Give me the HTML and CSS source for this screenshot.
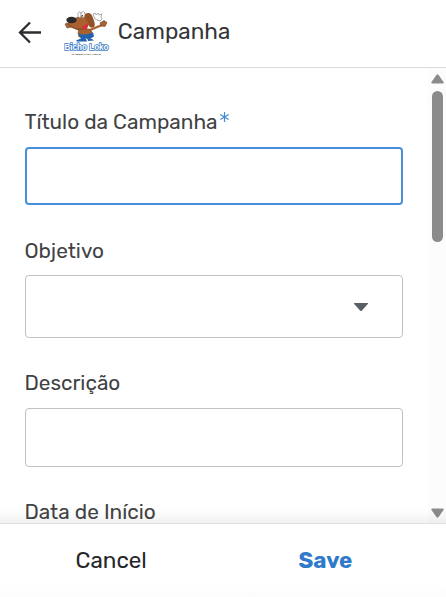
FILE: index.html
```html
<!DOCTYPE html>
<html lang="pt">
<head>
<meta charset="utf-8">
<title>Campanha</title>
<link rel="stylesheet" href="styles.css">
</head>
<body>
<header class="header">
  <svg class="back" width="24" height="24" viewBox="0 0 24 24"><path d="M23 11.500H2.500M12 1.500L2 11.500l10 10"/></svg>
  <svg class="logo" width="48" height="48" viewBox="0 0 48 48">
    <path class="glove" d="M29 4l2-1 1 2 2-2 1 2 3-1-1 3 1 2-2 2-3-1-2-1z"/>
    <path class="fur-line" d="M17 20.500L5 15.500M26 20l12-5"/>
    <path class="fur" d="M1 14l2-1 3 1 1 3-4 1zM36 13l4-2.500 3 2-2 4-4-.5z"/>
    <path class="fur" d="M15 19h11l3 5-2 3H15l-1-4z"/>
    <path class="fur" d="M4 11l8-3q4-2 10-4 5 3 3 10-2 5-8 5-8-.5-11-3-2-2-2-5z"/>
    <path class="ear" d="M21 4q6-3 8 4 3 7 1 9-3 2-5-1-1-5-4-8z"/>
    <path class="mouth" d="M17.500 16.500q4-.5 5.500-4 2 6-1 7-3 0-4.500-3z"/>
    <ellipse class="nose" cx="7.500" cy="10" rx="5.200" ry="3.200"/>
    <ellipse class="eye" cx="15.500" cy="4.700" rx="1.700" ry="2.800"/>
    <ellipse class="eye" cx="19" cy="4.500" rx="1.900" ry="2.900"/>
    <circle class="nose" cx="18.400" cy="5.800" r=".7"/>
    <path class="pants" d="M14 23.500q7 2.500 15-1l1 4-5 3-3-1-4 2zM12 30.500l5-2 5 .5 1 2.500H13zM23 28l5 1 2 1.500-6 .5z"/>
    <text class="logo-name" x=".500" y="39.800" textLength="44" lengthAdjust="spacingAndGlyphs">Bicho Loko</text>
    <text class="logo-tag" x="8" y="44.600" textLength="29" lengthAdjust="spacingAndGlyphs">CABER PARA AMAR</text>
  </svg>
  <h1 class="title">Campanha</h1>
</header>
<main class="content">
  <form class="form">
    <div class="field"><label class="label">Título da Campanha<svg class="star" width="9" height="10" viewBox="0 0 9 10"><path d="M4.500 0v10M.3 2.600l8.400 4.800M8.700 2.600L.3 7.400"/></svg></label><div class="box box-active"></div></div>
    <div class="field field-select"><label class="label">Objetivo</label><div class="box box-select"><svg width="16" height="9" viewBox="0 0 16 9"><path class="caret" d="M1.500 0h13q1 0 .3 1L9 7.600q-1 1-2 0L1.200 1q-.7-1 .3-1z"/></svg></div></div>
    <div class="field field-desc"><label class="label">Descrição</label><div class="box box-desc"></div></div>
    <div class="field"><label class="label">Data de Início</label></div>
  </form>
  <div class="scrollbar">
    <svg width="13" height="10" viewBox="0 0 13 10"><path d="M5.400.9q1.100-1.200 2.200 0l4.900 7q.8 1.600-1 1.600h-10q-1.800 0-1-1.600z"/></svg>
    <div class="thumb"></div>
    <svg class="down" width="13" height="10" viewBox="0 0 13 10"><path d="M5.400 9.100q1.100 1.200 2.200 0l4.900-7q.8-1.600-1-1.600h-10q-1.800 0-1 1.600z"/></svg>
  </div>
  <div class="fade"></div>
</main>
<footer class="footer"><span class="cancel">Cancel</span><span class="save">Save</span></footer>
</body>
</html>
```
FILE: styles.css
```css
* { box-sizing: border-box; }
body {
  margin: 0;
  width: 446px;
  height: 597px;
  display: flex;
  flex-direction: column;
  overflow: hidden;
  background: #fff;
  color: #414244;
  font-family: Rubik, Roboto, "Liberation Sans", sans-serif;
}
.header {
  height: 68px;
  flex: none;
  display: flex;
  align-items: flex-start;
  border-bottom: 1px solid #dadbdc;
}
.back { margin: 21px 0 0 18px; fill: none; stroke: #2c2d30; stroke-width: 2.3; }
.logo { margin: 10px 0 0 22px; }
.fur { fill: #a9622f; stroke: #63391f; stroke-width: .5; }
.fur-line { fill: none; stroke: #a9622f; stroke-width: 2.4; }
.ear { fill: #955126; }
.mouth { fill: #d92f35; }
.nose { fill: #292a2d; }
.eye, .glove { fill: #fff; stroke: #888; stroke-width: .7; }
.pants { fill: #2262ad; }
.logo-name {
  font: bold 8.5px "Liberation Sans", sans-serif;
  fill: #fff;
  stroke: #3a7cc6;
  stroke-width: 1.6;
  paint-order: stroke;
}
.logo-tag { font: bold 2.4px "Liberation Sans", sans-serif; fill: #444; }
.title {
  margin: 19px 0 0 5.8px;
  font-size: 22.4px;
  line-height: 26px;
  font-weight: 400;
  color: #343538;
}
.content { position: relative; height: 455px; flex: none; display: flex; overflow: hidden; }
.form { width: 428px; padding: 41px 25px 0; }
.label {
  height: 26px;
  margin-left: -.6px;
  display: flex;
  align-items: flex-start;
  font-size: 20.8px;
  line-height: 26px;
  white-space: nowrap;
}
.star { margin: 3px 0 0 2px; fill: none; stroke: #448bd1; stroke-width: 1.2; }
.box { width: 378px; border: 1px solid #bfc1c5; border-radius: 4px; }
.box-active { height: 58px; margin-top: 12px; border: 2px solid #4790d9; }
.field-select { margin-top: 33px; }
.box-select {
  height: 63px;
  margin-top: 11px;
  display: flex;
  align-items: center;
  justify-content: flex-end;
  padding: 2px 33px 0 0;
}
.caret { fill: #596064; }
.field-desc { margin-top: 32px; }
.box-desc { height: 59px; margin: 12px 0 32px; }
.scrollbar {
  width: 18px;
  display: flex;
  flex-direction: column;
  align-items: center;
  padding: 6px 0 5px;
  background: #fcfcfc;
  fill: #8b8b8b;
}
.thumb { width: 11px; height: 151px; margin-top: 7px; border-radius: 6px; background: #8b8b8b; }
.down { margin-top: auto; }
.fade {
  position: absolute;
  inset: auto 0 0;
  height: 14px;
  background: linear-gradient(transparent, rgba(0, 0, 0, .055));
}
.footer {
  height: 74px;
  border-top: 1px solid #dedfe0;
  display: flex;
  font-size: 22.4px;
  line-height: 26px;
  background: linear-gradient(#fff 75%, #fcfcfc);
}
.cancel { width: 222px; padding: 24px 0 0 75.6px; color: #252629; }
.save { padding: 24px 0 0 76.5px; font-weight: 700; color: #2f7acb; }
```
